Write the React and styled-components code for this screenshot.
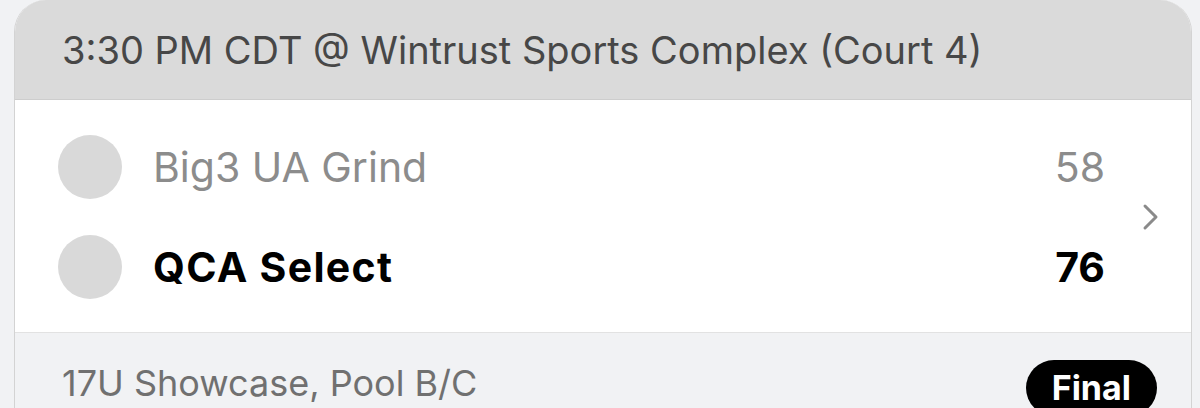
import React from 'react';
import styled, { createGlobalStyle } from 'styled-components';

const GlobalStyle = createGlobalStyle`
    html, body {
        margin: 0;
        padding: 0;
        background: #f1f2f4;
        font-family: Inter, "Noto Sans", sans-serif;
    }
`

const teams = [
    { name: 'Big3 UA Grind', score: 58, winner: false },
    { name: 'QCA Select', score: 76, winner: true },
];

function Chevron() {
    return (
        <svg width='18' height='28' viewBox='0 0 18 28' fill='none'>
            <path d='M3 3 L14 14 L3 25' stroke='#8a8a8a' strokeWidth='3' strokeLinecap='round' strokeLinejoin='round' />
        </svg>
    )
}

function App() {
    return (
        <>
        <GlobalStyle />
        <Page>
            <Card>
                <Header>3:30 PM CDT @ Wintrust Sports Complex (Court 4)</Header>
                <Body>
                    <Rows>
                        {teams.map(team => (
                            <Row key={team.name}>
                                <Avatar />
                                <TeamName $winner={team.winner}>{team.name}</TeamName>
                                <Score $winner={team.winner}>{team.score}</Score>
                            </Row>
                        ))}
                    </Rows>
                    <Arrow>
                        <Chevron />
                    </Arrow>
                </Body>
                <Footer>
                    <Event>17U Showcase, Pool B/C</Event>
                    <Status>Final</Status>
                </Footer>
            </Card>
        </Page>
        </>
    )
}

export default App;

const Page = styled.div`
    height: 408px;
    overflow: hidden;
    padding-left: 14px;
    padding-right: 8px;
`

const Card = styled.div`
    background: #fff;
    border: 1px solid #d3d3d3;
    border-top: none;
    border-radius: 32px 32px 0 0;
    overflow: hidden;
`

const Header = styled.div`
    height: 100px;
    box-sizing: border-box;
    display: flex;
    align-items: center;
    padding-left: 47px;
    background: #dadada;
    border-bottom: 1px solid #cdcdcd;
    color: #474747;
    font-size: 38px;
    font-weight: 400;
`

const Body = styled.div`
    display: flex;
    align-items: center;
    padding: 17px 0 15px 43px;
    border-bottom: 1px solid #e2e2e2;
`

const Rows = styled.div`
    flex: 1;
    display: flex;
    flex-direction: column;
`

const Row = styled.div`
    height: 100px;
    display: flex;
    align-items: center;
`

const Avatar = styled.div`
    width: 64px;
    height: 64px;
    border-radius: 50%;
    background: #d9d9d9;
    flex-shrink: 0;
`

const TeamName = styled.span`
    flex: 1;
    margin-left: 31px;
    font-size: 41px;
    font-weight: ${props => props.$winner ? 700 : 400};
    letter-spacing: ${props => props.$winner ? '1.3px' : '0'};
    color: ${props => props.$winner ? '#000' : '#8c8c8c'};
`

const Score = styled.span`
    font-size: 41px;
    font-weight: ${props => props.$winner ? 700 : 400};
    color: ${props => props.$winner ? '#000' : '#8c8c8c'};
`

const Arrow = styled.div`
    width: 86px;
    display: flex;
    justify-content: center;
    padding-left: 6px;
    box-sizing: border-box;
`

const Footer = styled.div`
    display: flex;
    align-items: center;
    justify-content: space-between;
    height: 100px;
    padding: 0 34px 0 47px;
    background: #f1f2f4;
`

const Event = styled.span`
    font-size: 36px;
    color: #707070;
`

const Status = styled.span`
    margin-top: 10px;
    background: #000;
    color: #fff;
    font-size: 34px;
    font-weight: 700;
    padding: 7px 26px 8px;
    border-radius: 30px;
`
